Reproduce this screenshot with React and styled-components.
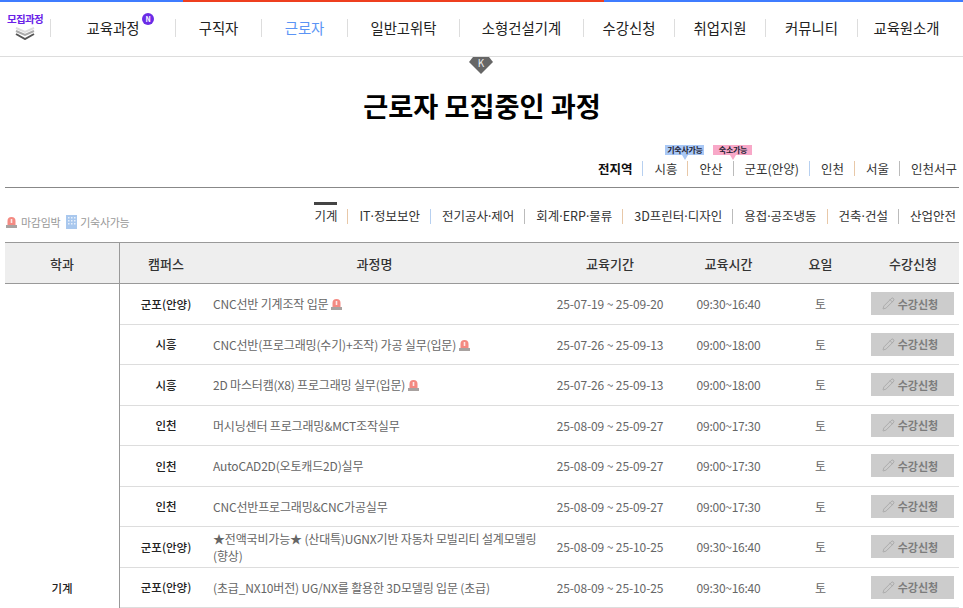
import React from "react";
import styled, { createGlobalStyle } from "styled-components";
import { Pencil } from "lucide-react";

const Global = createGlobalStyle`
  html, body { margin: 0; padding: 0; background: #fff; overflow: hidden; }
  body { font-family: "Noto Sans CJK KR", "Noto Sans", sans-serif; }
`;
const Page = styled.div`
  width: 963px; height: 608px; overflow: hidden; background: #fff;
`;
const TopBar = styled.div`
  height: 2px;
  background: linear-gradient(to right, #3f7cff 0 183px, #ee3f1f 183px 604px, #3f7cff 604px);
`;
const Header = styled.header`
  height: 54px; display: flex; align-items: center; border-bottom: 1px solid #ddd; box-sizing: content-box;
`;
const Recruit = styled.div`
  width: 50px; height: 32px; flex: none; display: flex; flex-direction: column; align-items: center;
  margin-top: -2px; box-sizing: border-box;
`;
const RecruitLabel = styled.span`
  font-size: 10.5px; line-height: 14px; font-weight: 700; color: #6a22e8; white-space: nowrap; letter-spacing: -0.6px;
`;
const Nav = styled.nav`display: flex; align-items: center; margin-top: -2px;`;
const NavItem = styled.a`
  position: relative; width: ${p => p.$w}px; height: 18px; box-sizing: border-box;
  display: flex; align-items: center; justify-content: center;
  border-left: 1px solid #ddd; font-size: 14.4px; line-height: 18px; white-space: nowrap;
  color: ${p => (p.$active ? "#5b94f5" : "#222")};
`;
const NewBadge = styled.span`
  position: absolute; left: 91px; top: -6px; width: 12px; height: 12px; border-radius: 50%;
  background: #6a2ce6; color: #fff; font-size: 7px; line-height: 12px; text-align: center; font-weight: 700;
`;
const Main = styled.main`padding: 0 4px 0 5px;`;
const Title = styled.h1`
  margin: 28px 0 0; font-size: 27.2px; line-height: 40px; font-weight: 700; color: #000; text-align: center;
`;
const CampusRow = styled.div`
  margin-top: 34px; display: flex; justify-content: flex-end; align-items: center;
  border-bottom: 1px solid #888; padding: 0 2px 10px 0; box-sizing: content-box; height: 18px;
`;
const sepColor = p => (p.$sep === "b" ? "#b7d0f0" : p.$sep === "o" ? "#e8c8a8" : "#bbb");
const LinkItem = styled.span`
  position: relative; font-size: 12.5px; line-height: 15px; color: ${p => (p.$on ? "#111" : "#333")};
  font-weight: ${p => (p.$on ? 700 : 400)}; padding: 0 11px; white-space: nowrap;
  &:last-child { padding-right: 0; }
  &:not(:last-child)::after {
    content: ""; position: absolute; right: 0; top: 0; width: 1px; height: 15px; background: ${sepColor};
  }
`;
const Bubble = styled.span`
  position: absolute; top: -16px; left: ${p => p.$left}px; width: 39px; height: 10px; text-align: center;
  font-size: 8px; line-height: 10px; color: #223; font-weight: 700; white-space: nowrap; letter-spacing: -0.3px;
  background: ${p => p.$bg};
  &::after {
    content: ""; position: absolute; left: 50%; bottom: -5px; margin-left: -3px;
    border: solid transparent; border-width: 5px 3px 0; border-top-color: ${p => p.$bg};
  }
`;
const TabRow = styled.div`
  display: flex; justify-content: space-between; align-items: flex-start; height: 54px; box-sizing: border-box; padding-right: 3px;
`;
const Legend = styled.div`
  display: flex; align-items: center; gap: 6px; margin: 26px 0 0 1px; font-size: 11px; line-height: 16px; color: #999;
`;
const LegendItem = styled.span`
  display: inline-flex; align-items: center; gap: 3px; letter-spacing: -0.3px;
  &:first-child { gap: 4px; }
`;
const Tabs = styled.div`display: flex; margin-top: 14px;`;
const Tab = styled.span`
  position: relative; font-size: 12.5px; line-height: 15px; color: #333; padding: 6px 11px 0; white-space: nowrap;
  &:first-child { padding-left: 0; }
  &:last-child { padding-right: 0; }
  &:first-child::before {
    content: ""; position: absolute; left: 0; top: 0; width: 23px; height: 3px; background: #444;
  }
  &:not(:last-child)::after {
    content: ""; position: absolute; right: 0; top: 7px; width: 1px; height: 15px; background: ${sepColor};
  }
`;
const Dot = styled.span`font-family: "Noto Sans", sans-serif;`;
const Table = styled.table`
  width: 954px; border-collapse: separate; border-spacing: 0; table-layout: fixed; font-size: 12px;
`;
const Th = styled.th`
  height: 40px; padding: 0; background: #eee; font-size: 13px; font-weight: 500; color: #333;
  border-top: 1px solid #999; border-bottom: 1px solid #999;
  ${p => p.$first && "border-right: 1px solid #999;"}
`;
const Dept = styled.td`
  padding: 0 0 12px; text-align: center; vertical-align: bottom; font-size: 11.5px; font-weight: 500; color: #222;
  border-right: 1px solid #999;
`;
const Row = styled.tr`height: 40.5px;`;
const Td = styled.td`
  padding: 0; text-align: center; color: #666; font-size: 12px; letter-spacing: -0.1px;
  border-bottom: 1px solid #ddd; box-sizing: border-box;
`;
const Time = styled(Td)`letter-spacing: -0.25px;`;
const Campus = styled(Td)`color: #222; font-weight: 500; font-size: 11.5px; letter-spacing: 0;`;
const Course = styled(Td)`text-align: left; line-height: 17px; padding-left: 1px; letter-spacing: -0.17px;`;
const Apply = styled.button`
  width: 83px; height: 23px; padding: 0 4px 0 0; border: 0; background: #ccc; color: #7c7c7c; margin-right: 2px;
  font: 700 11px "Noto Sans CJK KR", sans-serif; display: inline-flex; align-items: center; justify-content: center; gap: 3px; vertical-align: middle;
`;
const Diamond = styled.div`
  position: absolute; left: 469px; top: 57px;
  width: 24px; height: 17px; background: #666; color: #eee; font-size: 10px; line-height: 12px; text-align: center;
  clip-path: polygon(4px 0, 20px 0, 24px 5px, 12px 17px, 0 5px);
`;
const SirenMark = styled.svg`vertical-align: -1px;`;

const Siren = () => (
  <SirenMark width="11" height="12" viewBox="0 0 11 12">
    <path d="M1.5 9V5a4 4 0 0 1 8 0v4z" fill="#f48a82" />
    <rect x="4.7" y="3" width="1.6" height="4" fill="#fff" opacity=".8" />
    <rect x="0" y="9" width="11" height="3" fill="#a8a2a0" />
  </SirenMark>
);
const Building = () => (
  <svg width="11" height="14" viewBox="0 0 11 14">
    <rect width="11" height="14" fill="#a9c8ee" />
    {[2, 5, 8].flatMap(x => [2, 5, 8].map(y => <rect key={x + "-" + y} x={x} y={y} width="1.5" height="1.5" fill="#e8f0fb" />))}
  </svg>
);
const Chevrons = () => (
  <svg width="20" height="14" viewBox="0 0 20 14" fill="none" strokeWidth="2">
    <path d="M1 2l9 4 9-4" stroke="#ddd" />
    <path d="M1 5l9 4 9-4" stroke="#aaa" />
    <path d="M1 8l9 5 9-5" stroke="#555" />
  </svg>
);

const withDots = t => t.split("·").flatMap((part, i) => (i ? [<Dot key={i}>·</Dot>, part] : [part]));

const nav = [
  ["구직자", 86], ["근로자", 86, true], ["일반고위탁", 112], ["소형건설기계", 124],
  ["수강신청", 91], ["취업지원", 91], ["커뮤니티", 92],
];
const campuses = [
  ["전지역", "b", true], ["시흥", "o"], ["안산", "n"], ["군포(안양)", "b"], ["인천", "o"], ["서울", "n"], ["인천서구"],
];
const tabs = [
  ["기계", "o"], ["IT·정보보안", "b"], ["전기공사·제어", "n"], ["회계·ERP·물류", "o"], ["3D프린터·디자인", "n"],
  ["용접·공조냉동", "o"], ["건축·건설", "n"], ["산업안전"],
];
const rows = [
  ["군포(안양)", "CNC선반 기계조작 입문", 1, "25-07-19 ~ 25-09-20", "09:30~16:40"],
  ["시흥", "CNC선반(프로그래밍(수기)+조작) 가공 실무(입문)", 1, "25-07-26 ~ 25-09-13", "09:00~18:00"],
  ["시흥", "2D 마스터캠(X8) 프로그래밍 실무(입문)", 1, "25-07-26 ~ 25-09-13", "09:00~18:00"],
  ["인천", "머시닝센터 프로그래밍&MCT조작실무", 0, "25-08-09 ~ 25-09-27", "09:00~17:30"],
  ["인천", "AutoCAD2D(오토캐드2D)실무", 0, "25-08-09 ~ 25-09-27", "09:00~17:30"],
  ["인천", "CNC선반프로그래밍&CNC가공실무", 0, "25-08-09 ~ 25-09-27", "09:00~17:30"],
  ["군포(안양)", "★전액국비가능★ (산대특)UGNX기반 자동차 모빌리티 설계모델링 (향상)", 0, "25-08-09 ~ 25-10-25", "09:30~16:40"],
  ["군포(안양)", "(초급_NX10버전) UG/NX를 활용한 3D모델링 입문 (초급)", 0, "25-08-09 ~ 25-10-25", "09:30~16:40"],
];

export default function App() {
  return (
    <Page>
      <Global />
      <TopBar />
      <Header>
        <Recruit>
          <RecruitLabel>모집과정</RecruitLabel>
          <Chevrons />
        </Recruit>
        <Nav>
          <NavItem $w={125}>교육과정<NewBadge>N</NewBadge></NavItem>
          {nav.map(([t, w, a]) => <NavItem key={t} $w={w} $active={a}>{t}</NavItem>)}
          <NavItem $w={98}>교육원소개</NavItem>
        </Nav>
      </Header>
      <Diamond>K</Diamond>
      <Main>
        <Title>근로자 모집중인 과정</Title>
        <CampusRow>
          {campuses.map(([t, s, on]) => (
            <LinkItem key={t} $sep={s} $on={on}>
              {t === "시흥" && <Bubble $bg="#a9c8f5" $left={22}>기숙사가능</Bubble>}
              {t === "안산" && <Bubble $bg="#f8a8c8" $left={25}>숙소가능</Bubble>}
              {t}
            </LinkItem>
          ))}
        </CampusRow>
        <TabRow>
          <Legend>
            <LegendItem><Siren />마감임박</LegendItem>
            <LegendItem><Building />기숙사가능</LegendItem>
          </Legend>
          <Tabs>
            {tabs.map(([t, s]) => <Tab key={t} $sep={s}>{withDots(t)}</Tab>)}
          </Tabs>
        </TabRow>
        <Table>
          <colgroup>
            <col style={{ width: 115 }} /><col style={{ width: 92 }} /><col style={{ width: 325 }} />
            <col style={{ width: 146 }} /><col style={{ width: 91 }} /><col style={{ width: 93 }} /><col style={{ width: 92 }} />
          </colgroup>
          <thead>
            <tr>
              <Th $first>학과</Th><Th>캠퍼스</Th><Th>과정명</Th><Th>교육기간</Th><Th>교육시간</Th><Th>요일</Th><Th>수강신청</Th>
            </tr>
          </thead>
          <tbody>
            {rows.map((r, i) => (
              <Row key={i}>
                {i === 0 && <Dept rowSpan={8}>기계</Dept>}
                <Campus>{r[0]}</Campus>
                <Course>{r[1]} {r[2] ? <Siren /> : null}</Course>
                <Td>{r[3]}</Td>
                <Time>{r[4]}</Time>
                <Td>토</Td>
                <Td><Apply><Pencil size={13} strokeWidth={1.2} color="#999" />수강신청</Apply></Td>
              </Row>
            ))}
          </tbody>
        </Table>
      </Main>
    </Page>
  );
}
